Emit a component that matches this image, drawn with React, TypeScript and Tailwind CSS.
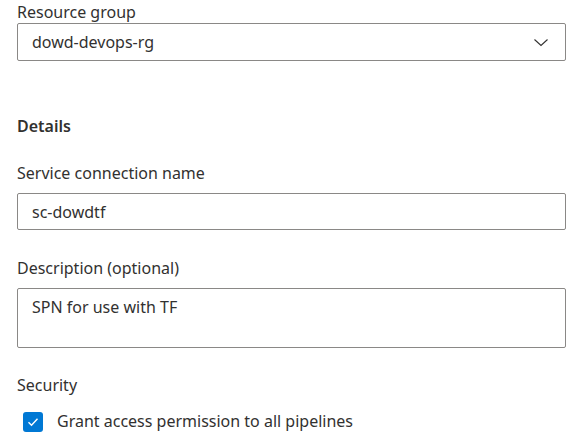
import React from "react";

export default function App() {
  return (
    <div
      className="w-[578px] h-[448px] bg-white overflow-hidden pl-[17px] pr-[12px] pt-[2px] text-[16px] text-[#323130] font-['Noto_Sans',sans-serif]"
    >
      <div className="h-[21px] leading-[21px]">Resource group</div>
      <div className="h-[38px] border border-[#8a8886] rounded-[2px] flex items-center justify-between pl-[14px] pr-[16px]">
        <span>dowd-devops-rg</span>
        <svg width="16" height="16" viewBox="0 0 16 16" fill="none">
          <path d="M1.5 5.5 L8 11.5 L14.5 5.5" stroke="#323130" strokeWidth="1.1" />
        </svg>
      </div>
      <div className="mt-[55px] h-[21px] leading-[21px] font-semibold">Details</div>
      <div className="mt-[26px] h-[21px] leading-[21px]">Service connection name</div>
      <div className="mt-[9px] h-[37px] border border-[#8a8886] rounded-[2px] flex items-center pl-[14px]">
        sc-dowdtf
      </div>
      <div className="mt-[28px] h-[21px] leading-[21px]">Description (optional)</div>
      <div className="mt-[9px] h-[60px] border border-[#8a8886] rounded-[2px] pl-[14px] pt-[8px] leading-[21px]">
        SPN for use with TF
      </div>
      <div className="mt-[27px] h-[21px] leading-[21px]">Security</div>
      <div className="mt-[15px] flex items-center pl-[6px]">
        <div className="w-[20px] h-[20px] rounded-[3px] bg-[#0078d4] flex items-center justify-center">
          <svg width="14" height="14" viewBox="0 0 14 14" fill="none">
            <path d="M2.5 7.3 L5.5 10.2 L11.5 3.8" stroke="white" strokeWidth="1.4" />
          </svg>
        </div>
        <span className="ml-[14px] leading-[21px]">Grant access permission to all pipelines</span>
      </div>
    </div>
  );
}
